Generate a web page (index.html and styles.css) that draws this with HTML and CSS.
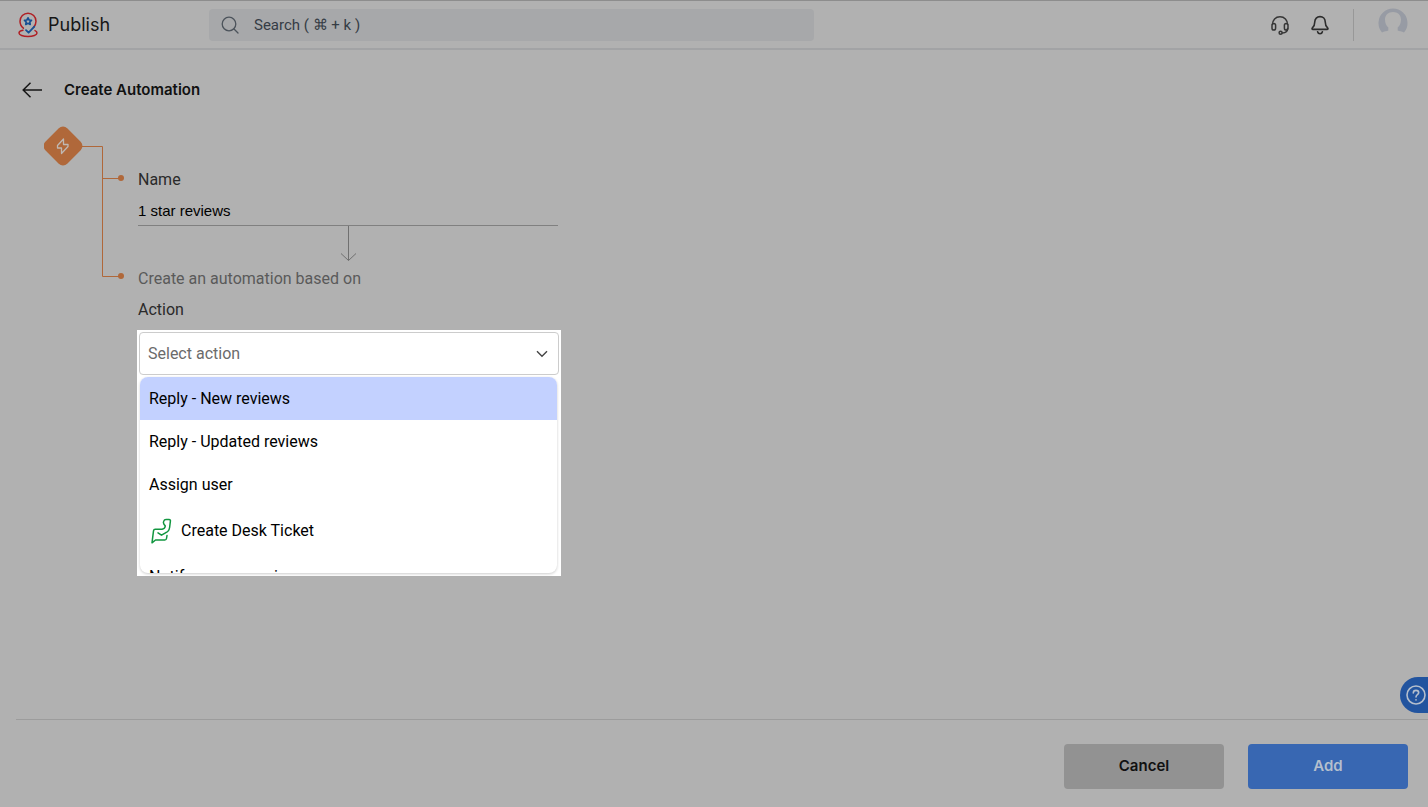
FILE: index.html
```html
<!DOCTYPE html>
<html lang="en">
<head>
    <meta charset="UTF-8">
    <meta name="viewport" content="width=device-width, initial-scale=1.0">
    <title>Publish - Create Automation</title>
    <link rel="stylesheet" href="styles.css">
</head>
<body>
    <header class="topbar">
        <a class="brand" href="#">
            <svg width="20" height="26" viewBox="0 0 20 26" fill="none" stroke-width="1.5" stroke-linecap="round" stroke-linejoin="round">
                <path stroke="#b01f24" d="M5.4 16.2C3.2 14.4 2 12.200 2 9.200a8 8 0 0 1 16 0c0 2.600-1 4.600-2.500 6.200M5 18.200c-2.400.5-4 1.400-4 2.800 0 2 4 3.500 9 3.500s9-1.500 9-3.500c0-1-.8-1.900-2-2.400"/>
                <path stroke="#164f94" stroke-width="1.700" d="M10 5.800l1.100 2.200 2.400.3-1.700 1.700.4 2.400-2.200-1.100-2.200 1.100.4-2.400L6.500 8.300 8.900 8z"/>
                <path stroke="#164f94" stroke-width="1.800" d="M8 18.200l2.600 2.500 5.700-6"/>
            </svg>
            <span>Publish</span>
        </a>
        <label class="search">
            <svg width="18" height="18" viewBox="0 0 18 18" fill="none" stroke="#4c535b" stroke-width="1.300" stroke-linecap="round">
                <circle cx="8" cy="8" r="6.800"/>
                <path d="M13 13l4 4"/>
            </svg>
            <input type="text" placeholder="Search ( ⌘ + k )" aria-label="Search">
        </label>
        <div class="tools">
            <button class="icon-button" aria-label="Support">
                <svg width="20" height="20" viewBox="0 0 20 20" fill="none" stroke="#363636" stroke-width="1.500" stroke-linecap="round" stroke-linejoin="round">
                    <path d="M2.500 9.500C2.500 5 5.500 1.800 10 1.800s7.500 3.200 7.500 7.700"/>
                    <rect x="2" y="8.500" width="3.600" height="6.500" rx="1.800"/>
                    <rect x="14.400" y="8.500" width="3.600" height="6.500" rx="1.800"/>
                    <path d="M17.500 13.500c0 3-1.800 4.400-5 4.400"/>
                    <circle cx="10.600" cy="17.700" r="1.500"/>
                </svg>
            </button>
            <button class="icon-button" aria-label="Notifications">
                <svg width="20" height="20" viewBox="0 0 20 20" fill="none" stroke="#2c2c2c" stroke-width="1.600" stroke-linecap="round" stroke-linejoin="round">
                    <path d="M10 1.600c-3.100 0-5.200 2.200-5.200 5.200 0 3.200-.6 4.400-2.400 6-.7.700-.4 1.600.6 1.600h14c1 0 1.300-.9.600-1.600-1.800-1.600-2.400-2.800-2.400-6 0-3-2.100-5.200-5.200-5.200z"/>
                    <path d="M7.600 16.800c.3 1.200 1.200 1.900 2.400 1.900s2.100-.7 2.400-1.900"/>
                </svg>
            </button>
            <span class="divider"></span>
            <button class="icon-button" aria-label="Profile">
                <svg width="30" height="34" viewBox="0 0 30 34" fill="#979ba4">
                    <path d="M4 24.500A14.500 14.500 0 1 1 26 24.500C24 23 21 23.500 19.700 22.500V19.500C21.800 18 23 15 23 11.500 23 7 19.800 4 15 4S7 7 7 11.500C7 15 8.200 18 10.300 19.500V22.500C9 23.500 6 23 4 24.500z"/>
                </svg>
            </button>
        </div>
    </header>

    <main class="content">
        <div class="page-title">
            <a class="back" href="#" aria-label="Back">
                <svg width="20" height="16" viewBox="0 0 20 16" fill="none" stroke="#161616" stroke-width="1.500">
                    <path d="M20 8H1M8.500.8L1.200 8l7.300 7.200"/>
                </svg>
            </a>
            <h1>Create Automation</h1>
        </div>

        <div class="flow">
            <svg class="tree" width="82" height="156" viewBox="0 0 82 156" fill="none">
                <path stroke="#b0683a" d="M36 20.500H58.500V150.500H77M58.500 52.500H77"/>
                <rect x="3.500" y="4.500" width="31" height="31" rx="6" transform="rotate(45 19 20)" fill="#b0683a"/>
                <path stroke="#c0b8b2" stroke-width="1.300" stroke-linejoin="round" d="M19.500 13L13.500 19.500V22H17.500V27.500L24 20.500V18.500H19.500z"/>
                <circle cx="77" cy="52" r="3" fill="#b0683a"/>
                <circle cx="77" cy="150" r="3" fill="#b0683a"/>
            </svg>

            <form class="automation-form">
                <div class="field">
                    <label for="name">Name</label>
                    <input id="name" type="text" value="1 star reviews">
                </div>
                <svg class="down-arrow" width="16" height="36" viewBox="0 0 16 36" fill="none" stroke="#707070">
                    <path d="M7.500 0V34.500M0 27.500l7.500 7 7.500-7"/>
                </svg>
                <p class="hint">Create an automation based on</p>
                <label class="action-label" for="action">Action</label>
                <div class="spotlight">
                    <div class="select-box">
                        <select id="action">
                            <option>Select action</option>
                        </select>
                        <svg width="12" height="8" viewBox="0 0 12 8" fill="none" stroke="#444" stroke-width="1.400">
                            <path d="M1 1.200l5 5 5-5"/>
                        </svg>
                    </div>
                    <ul class="menu">
                        <li><button type="button" class="option active">Reply - New reviews</button></li>
                        <li><button type="button" class="option">Reply - Updated reviews</button></li>
                        <li><button type="button" class="option">Assign user</button></li>
                        <li>
                            <button type="button" class="option with-icon">
                                <svg width="24" height="26" viewBox="0 0 24 26" fill="none" stroke="#129640" stroke-width="1.500" stroke-linecap="round" stroke-linejoin="round">
                                    <path d="M18 17.500L17.500 20.500Q17.300 22 15.800 22H6.500L3 24.800 4.500 12.800Q4.700 11.200 6.200 11.200H13Q16 11 16.300 8L14.800 6Q14 4.500 14.800 3Q15.300 1.500 17 1.500H20Q21.700 1.500 21.400 3.200L20.600 9.500Q20 13.500 16.500 14.800L12.500 17.200 9 14.800"/>
                                </svg>
                                Create Desk Ticket
                            </button>
                        </li>
                        <li><button type="button" class="option">Notify user on reviews</button></li>
                    </ul>
                </div>
            </form>
        </div>
    </main>

    <footer class="actions">
        <button class="btn btn-cancel">Cancel</button>
        <button class="btn btn-add">Add</button>
    </footer>

    <button class="help" aria-label="Help">
        <svg width="20" height="20" viewBox="0 0 20 20" fill="none" stroke="#b5bfcd" stroke-width="1.600" stroke-linecap="round">
            <circle cx="10" cy="10" r="9"/>
            <path d="M7.300 8c0-1.600 1.100-2.600 2.700-2.600s2.700 1 2.700 2.400c0 1.900-2.700 2-2.700 4.200M10 14.800v.2"/>
        </svg>
    </button>
</body>
</html>
```
FILE: styles.css
```css
* {
    box-sizing: border-box;
}
body {
    margin: 0;
    min-height: 100vh;
    display: flex;
    flex-direction: column;
    background-color: #b1b1b1;
    color: #111;
    font-family: Roboto, "Liberation Sans", sans-serif;
    font-size: 16px;
    line-height: 24px;
}
button, input, select {
    font: inherit;
    color: inherit;
    border: none;
    background: none;
    padding: 0;
    margin: 0;
}
button {
    cursor: pointer;
}
svg {
    display: block;
    flex: none;
}

/* top bar */
.topbar {
    height: 50px;
    display: flex;
    align-items: center;
    padding: 0 20px 0 18px;
    border-top: 1px solid #8d8d8d;
    border-bottom: 2px solid #a2a3a5;
}
.brand {
    width: 191px;
    display: flex;
    align-items: center;
    gap: 10px;
    color: #161616;
    font-family: Inter, sans-serif;
    font-size: 18px;
    text-decoration: none;
}
.search {
    flex: 0 1 605px;
    height: 32px;
    display: flex;
    align-items: center;
    gap: 15px;
    padding: 0 12px;
    border-radius: 4px;
    background-color: #a7a8aa;
}
.search input {
    flex: 1;
    min-width: 0;
    font-size: 15px;
    outline: none;
}
.search input::placeholder {
    color: #353c45;
    opacity: 1;
}
.tools {
    margin-left: auto;
    display: flex;
    align-items: center;
    gap: 20px;
}
.divider {
    width: 1px;
    height: 32px;
    margin: 0 4px 0 3px;
    background-color: #989898;
}

/* page */
.content {
    flex: 1;
    padding: 28px 22px;
}
.page-title {
    display: flex;
    align-items: center;
    gap: 22px;
}
.page-title h1 {
    margin: 0;
    font-family: Inter, sans-serif;
    font-size: 15px;
    font-weight: 600;
}
.flow {
    display: flex;
    gap: 11px;
    margin: 24px 0 0 22px;
}
.automation-form {
    flex: 0 1 424px;
    padding-top: 42px;
}
.field {
    display: flex;
    flex-direction: column;
    gap: 4px;
    padding: 0 3px 0 1px;
    color: #2a2a2a;
}
.field input {
    height: 30px;
    border-bottom: 1px solid #808080;
    color: #000;
    font-family: "Liberation Sans", Arial, sans-serif;
    font-size: 15px;
    outline: none;
}
.down-arrow {
    margin: 0 auto;
}
.hint {
    margin: 5px 0 7px;
    padding-left: 1px;
    color: #5a5a5a;
}
.action-label {
    display: block;
    margin-bottom: 8px;
    padding-left: 1px;
    color: #2a2a2a;
}

/* action drop-down */
.spotlight {
    padding: 2px;
    background-color: #fff;
}
.select-box {
    display: grid;
    align-items: center;
}
.select-box select,
.select-box svg {
    grid-area: 1 / 1;
}
.select-box select {
    width: 100%;
    height: 43px;
    padding: 0 8px;
    border: 1px solid #ccc;
    border-radius: 4px;
    color: #6b6b6b;
    appearance: none;
    outline: none;
}
.select-box svg {
    justify-self: end;
    margin-right: 11px;
    pointer-events: none;
}
.menu {
    height: 196px;
    margin: 2px 2px 1px 1px;
    padding: 0;
    overflow: hidden;
    list-style: none;
    border-radius: 8px;
    box-shadow: 0 1px 3px rgba(0, 0, 0, 0.2);
}
.option {
    display: flex;
    align-items: center;
    gap: 8px;
    width: 100%;
    height: 43px;
    padding: 0 9px;
    color: #000;
    text-align: left;
}
.option.active {
    background-color: #c3d1ff;
}
.option.with-icon {
    height: 49px;
}

/* footer */
.actions {
    display: flex;
    justify-content: flex-end;
    gap: 24px;
    margin-left: 16px;
    padding: 24px 20px 18px 0;
    border-top: 1px solid #9c9c9c;
}
.btn {
    width: 160px;
    height: 45px;
    padding-bottom: 2px;
    border-radius: 4px;
    font-family: Inter, sans-serif;
    font-size: 15px;
    font-weight: 600;
}
.btn-cancel {
    background-color: #929292;
}
.btn-add {
    background-color: #3867b2;
    color: #b5bfcd;
}
.help {
    position: fixed;
    right: 0;
    bottom: 94px;
    width: 28px;
    height: 36px;
    padding-left: 6px;
    border-radius: 18px 0 0 18px;
    background-color: #22549f;
}
```
